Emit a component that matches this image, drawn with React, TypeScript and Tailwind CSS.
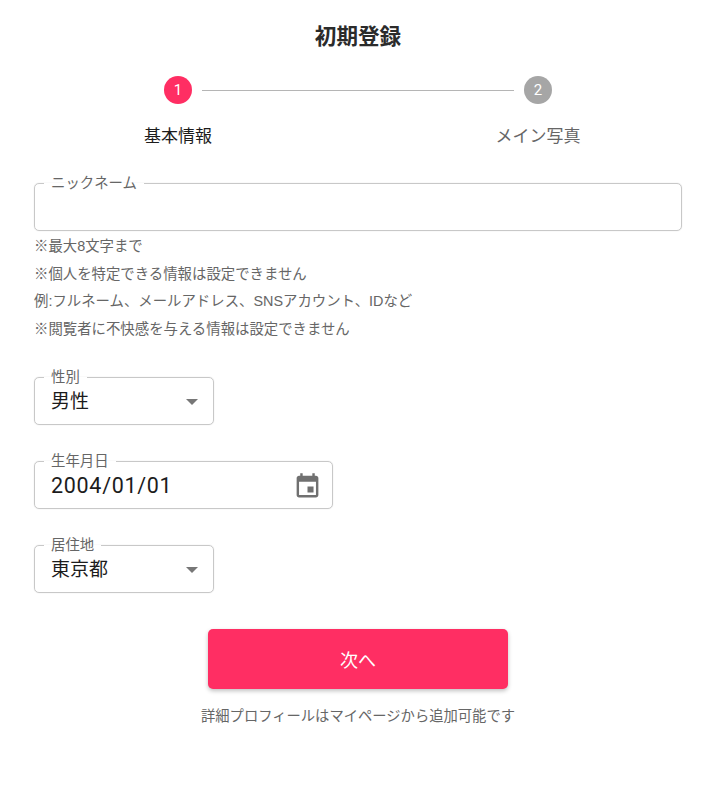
import React from 'react';

const font = { fontFamily: 'Roboto, "Noto Sans CJK JP", sans-serif' };
const noteFont = { fontFamily: '"Liberation Sans", "Noto Sans CJK JP", sans-serif' };

// 枠線に切り欠きのある入力欄
function Field({ label, width, children }: { label: string; width: string; children?: React.ReactNode }) {
    return (
        <fieldset className={`${width} h-[56px] border border-[#c8c8c8] rounded-[5px] pl-4 pr-[10px] shadow-[0_0_1px_#ccc]`}>
            <legend className="-ml-[7px] px-[7px] pt-[2px] text-[14.4px] leading-[14px] text-[#666]">{label}</legend>
            <div className="h-[34px] flex items-center justify-between">{children}</div>
        </fieldset>
    );
}

function Arrow() {
    return (
        <svg width="12" height="6" viewBox="0 0 12 6" className="mr-[5px]">
            <path d="M0 0h12L6 6z" fill="#777" />
        </svg>
    );
}

export default function App() {
    const notes = [
        '※最大8文字まで',
        '※個人を特定できる情報は設定できません',
        '例:フルネーム、メールアドレス、SNSアカウント、IDなど',
        '※閲覧者に不快感を与える情報は設定できません',
    ];

    return (
        <div className="w-[716px] h-[798px] bg-white" style={font}>
            <h1 className="pt-[22px] text-center text-[21.6px] leading-[30px] font-bold text-[#2b2b2b]">初期登録</h1>

            {/* ステッパー */}
            <div className="mt-[24px] px-[118px]">
                <div className="flex items-center px-[46px]">
                    <div className="w-7 h-7 rounded-full bg-[#ff2e63] text-white text-[15px] flex items-center justify-center">1</div>
                    <div className="flex-1 h-px bg-[#b5b5b5] mx-[10px]"></div>
                    <div className="w-7 h-7 rounded-full bg-[#a6a6a6] text-white text-[15px] flex items-center justify-center">2</div>
                </div>
                <div className="flex justify-between mt-[20px] text-[17px] leading-6">
                    <span className="w-[120px] text-center text-[#1c1c1c]">基本情報</span>
                    <span className="w-[120px] text-center text-[#666]">メイン写真</span>
                </div>
            </div>

            <div className="px-[34px] mt-[27px]">
                <Field label="ニックネーム" width="w-full" />

                <ul className="mt-[2px] text-[14.4px] leading-[27.5px] text-[#666]" style={noteFont}>
                    {notes.map((n) => <li key={n}>{n}</li>)}
                </ul>

                <div className="mt-[26px] flex flex-col gap-[28px]">
                    <Field label="性別" width="w-[180px]">
                        <span className="text-[19px] leading-6 text-[#1c1c1c]">男性</span>
                        <Arrow />
                    </Field>
                    <Field label="生年月日" width="w-[299px]">
                        <span className="text-[21.5px] tracking-[0.7px] leading-6 text-[#1c1c1c]">2004/01/01</span>
                        <svg width="29" height="29" viewBox="0 0 24 24" fill="#707070">
                            <path d="M17 12h-5v5h5v-5zM16 1v2H8V1H6v2H5c-1.11 0-1.99.9-1.99 2L3 19c0 1.1.89 2 2 2h14c1.1 0 2-.9 2-2V5c0-1.1-.9-2-2-2h-1V1h-2zm3 18H5V8h14v11z" />
                        </svg>
                    </Field>
                    <Field label="居住地" width="w-[180px]">
                        <span className="text-[19px] leading-6 text-[#1c1c1c]">東京都</span>
                        <Arrow />
                    </Field>
                </div>

                <button className="block mx-auto mt-[36px] pt-[3px] w-[300px] h-[60px] rounded-[5px] bg-[#ff2e63] text-white text-[18px] shadow-[0_2px_4px_rgba(0,0,0,0.25)]">次へ</button>
                <p className="mt-[17px] text-center text-[14.3px] leading-5 text-[#666]">詳細プロフィールはマイページから追加可能です</p>
            </div>
        </div>
    );
}
